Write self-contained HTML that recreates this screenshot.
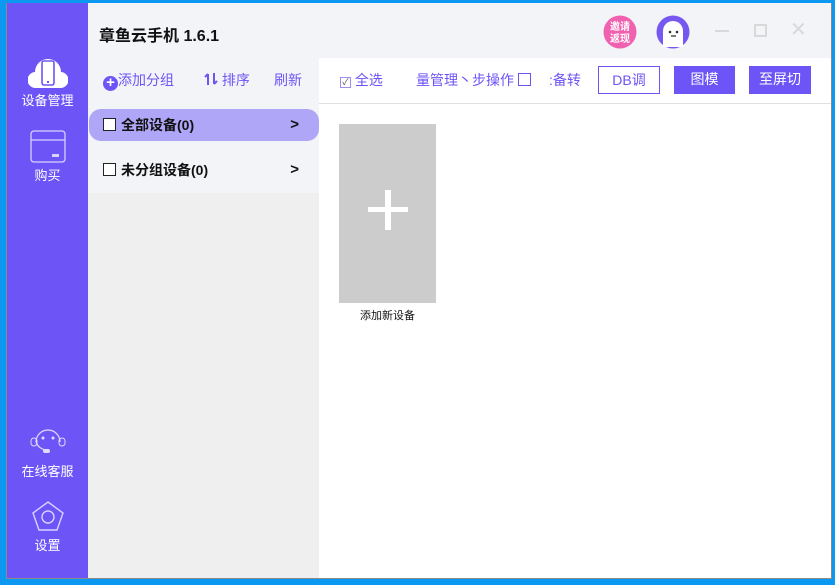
<!DOCTYPE html>
<html><head><meta charset="utf-8"><style>
*{margin:0;padding:0;box-sizing:border-box}
body{width:835px;height:585px;background:#0a98f0;position:relative;overflow:hidden;font-family:"Liberation Sans","Noto Sans CJK SC",sans-serif}
.win{position:absolute;left:6px;top:3px;width:826px;height:576px;background:#f3f4f8;border:1px solid #8a8a8a;border-top:none;overflow:hidden}
.side{position:absolute;left:0;top:0;width:81px;height:575px;background:#6d54f6;color:#fff;font-size:13px;text-align:center}
.side .it{position:absolute;left:0;width:81px}
.title{position:absolute;left:92px;top:19px;font-size:16px;font-weight:bold;color:#111}
.list{position:absolute;left:81px;top:55px;width:231px;height:520px;background:#f3f4f8}
.list .low{position:absolute;left:0;top:135px;width:231px;height:400px;background:#efefef}
.tb{position:absolute;font-size:14px;color:#6d54f6;top:12px}
.row{position:absolute;left:1px;width:230px;height:32px;border-radius:12px;font-size:14px;font-weight:bold;color:#111;line-height:32px;padding-left:14px}
.cb{display:inline-block;width:13px;height:13px;border:1px solid #222;vertical-align:-1px;margin-right:5px;background:#fff}
.row .ar{position:absolute;right:20px;top:0;font-weight:bold;font-size:15px}
.main{position:absolute;left:312px;top:55px;width:514px;height:520px;background:#fff}
.bar{position:absolute;left:0;top:0;width:514px;height:46px;border-bottom:1px solid #e0e0e0}
.t2{position:absolute;top:12px;font-size:14px;color:#6d54f6}
.btn{position:absolute;top:8px;height:28px;font-size:14px;line-height:26px;text-align:center;color:#fff;background:#6d54f6}
</style></head><body>
<div class="win">
 <div class="side">
  <div class="it" style="top:52px">
   <svg width="40" height="36" viewBox="0 0 40 36"><path d="M8 33a8 8 0 0 1-1-16 13 13 0 0 1 26 0 8 8 0 0 1-1 16z" fill="#fff"/><rect x="14" y="6" width="12" height="24" rx="2" fill="none" stroke="#6d54f6" stroke-width="1.6"/><rect x="19" y="26" width="2" height="2" fill="#6d54f6"/></svg>
   <div style="margin-top:-4px">设备管理</div>
  </div>
  <div class="it" style="top:127px">
   <svg width="36" height="34" viewBox="0 0 36 34"><rect x="1" y="1" width="34" height="31" rx="3" fill="none" stroke="#d8d2ff" stroke-width="1.3"/><line x1="1" y1="10" x2="35" y2="10" stroke="#d8d2ff" stroke-width="1.3"/><rect x="22" y="24" width="7" height="3" fill="#d8d2ff"/></svg>
   <div style="margin-top:-2px">购买</div>
  </div>
  <div class="it" style="top:421px">
   <svg width="36" height="34" viewBox="0 0 36 34"><path d="M6 18a12 12 0 1 1 24 0" fill="none" stroke="#e0dbff" stroke-width="1.2"/><path d="M6 18a12 12 0 0 0 12 8" fill="none" stroke="#e0dbff" stroke-width="1.2"/><rect x="1" y="14" width="6" height="8" rx="3" fill="none" stroke="#e0dbff"/><rect x="29" y="14" width="6" height="8" rx="3" fill="none" stroke="#e0dbff"/><circle cx="13" cy="14" r="1.5" fill="#e0dbff"/><circle cx="23" cy="14" r="1.5" fill="#e0dbff"/><rect x="13" y="25" width="7" height="4" rx="2" fill="#e0dbff"/></svg>
   <div>在线客服</div>
  </div>
  <div class="it" style="top:497px">
   <svg width="34" height="32" viewBox="0 0 34 32"><path d="M17 2 32 13 26 30H8L2 13z" fill="none" stroke="#d8d2ff" stroke-width="1.4"/><circle cx="17" cy="17" r="6" fill="none" stroke="#d8d2ff" stroke-width="1.4"/></svg>
   <div>设置</div>
  </div>
 </div>
 <div class="title">章鱼云手机 1.6.1</div>
 <svg style="position:absolute;left:596px;top:12px" width="34" height="34" viewBox="0 0 34 34"><circle cx="17" cy="17" r="16.5" fill="#f062b0"/><text x="17" y="15" font-size="10" font-weight="bold" fill="#fff" text-anchor="middle" font-family="Noto Sans CJK SC">邀请</text><text x="17" y="27" font-size="10" font-weight="bold" fill="#fff" text-anchor="middle" font-family="Noto Sans CJK SC">返现</text></svg>
 <svg style="position:absolute;left:649px;top:12px" width="34" height="34" viewBox="0 0 34 34"><circle cx="17" cy="17" r="16.5" fill="#7657f0"/><path d="M7 32V16a10 10 0 0 1 20 0v16z" fill="#fff"/><circle cx="14" cy="17" r="1.3" fill="#333"/><circle cx="21" cy="17" r="1.3" fill="#333"/><path d="M15 21h5" stroke="#333" stroke-width="1.3"/></svg>
 <div style="position:absolute;left:708px;top:27px;width:14px;height:2px;background:#d8d8d8"></div>
 <div style="position:absolute;left:747px;top:21px;width:13px;height:13px;border:2px solid #d8d8d8"></div>
 <div style="position:absolute;left:783px;top:14px;font-size:20px;color:#d8d8d8">✕</div>
 <div class="list">
  <div class="low"></div>
  <div class="tb" style="left:15px"><span style="display:inline-block;width:15px;height:15px;border-radius:50%;background:#6d54f6;color:#fff;font-size:15px;line-height:14px;text-align:center;font-weight:bold;vertical-align:-2px">+</span>添加分组</div>
  <div class="tb" style="left:116px"><svg width="14" height="14" viewBox="0 0 14 14" style="vertical-align:-1px"><path d="M4 13V2M1 5l3-3M10 1v11m3-3-3 3" fill="none" stroke="#6d54f6" stroke-width="2"/></svg> 排序</div>
  <div class="tb" style="left:186px">刷新</div>
  <div class="row" style="top:51px;background:#b0a6f8"><span class="cb"></span>全部设备(0)<span class="ar">&gt;</span></div>
  <div class="row" style="top:96px"><span class="cb"></span>未分组设备(0)<span class="ar">&gt;</span></div>
 </div>
 <div class="main">
  <div class="bar">
   <div class="t2" style="left:21px"><span style="display:inline-block;width:11px;height:11px;border:1px solid #9a8ef0;font-size:9px;line-height:9px;color:#555;text-align:center;vertical-align:0">✓</span> 全选</div>
   <div class="t2" style="left:97px">量管理丶步操作 <span style="display:inline-block;width:13px;height:13px;border:1px solid #6d54f6;vertical-align:-1px"></span></div>
   <div class="t2" style="left:230px">:备转</div>
   <div class="btn" style="left:279px;width:62px;background:#fff;color:#6d54f6;border:1px solid #6d54f6">DB调</div>
   <div class="btn" style="left:355px;width:61px">图模</div>
   <div class="btn" style="left:430px;width:62px">至屏切</div>
  </div>
  <div style="position:absolute;left:20px;top:66px;width:97px;height:179px;background:#cccccc">
   <div style="position:absolute;left:29px;top:83px;width:40px;height:5px;background:#fff"></div>
   <div style="position:absolute;left:46px;top:66px;width:6px;height:40px;background:#fff"></div>
  </div>
  <div style="position:absolute;left:20px;top:249px;width:97px;text-align:center;font-size:11px;color:#111">添加新设备</div>
 </div>
</div>
</body></html>
